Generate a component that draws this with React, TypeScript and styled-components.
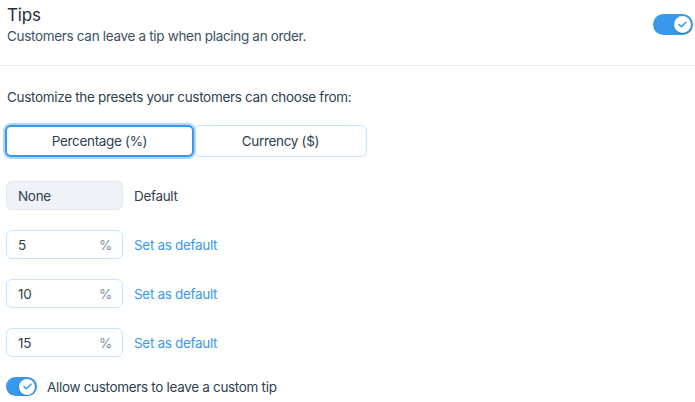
import { useState } from "react";
import styled, { createGlobalStyle } from "styled-components";

const GlobalStyle = createGlobalStyle`
  html, body {
    margin: 0;
    padding: 0;
    background: #ffffff;
  }
  body {
    font-family: Inter, "Noto Sans", "Liberation Sans", sans-serif;
    color: #2f3f50;
    letter-spacing: -0.32px;
    -webkit-font-smoothing: antialiased;
  }
`;

const presets = ["5", "10", "15"];

export default function App() {
  const [unit, setUnit] = useState<"percent" | "currency">("percent");
  const [enabled, setEnabled] = useState(true);
  const [custom, setCustom] = useState(true);

  return (
    <Page>
      <GlobalStyle />
      <Header>
        <div>
          <Title>Tips</Title>
          <Subtitle>Customers can leave a tip when placing an order.</Subtitle>
        </div>
        <Toggle $on={enabled} $width={40} $height={21} onClick={() => setEnabled(!enabled)}>
          <Knob $size={17}>
            <CheckIcon />
          </Knob>
        </Toggle>
      </Header>

      <Body>
        <Intro>Customize the presets your customers can choose from:</Intro>

        <Segmented>
          <SegButton $selected={unit === "percent"} $width={189} onClick={() => setUnit("percent")}>
            Percentage (%)
          </SegButton>
          <SegButton $selected={unit === "currency"} $width={173} onClick={() => setUnit("currency")}>
            Currency ($)
          </SegButton>
        </Segmented>

        <Presets>
          <PresetRow>
            <NoneBox>None</NoneBox>
            <DefaultLabel>Default</DefaultLabel>
          </PresetRow>
          {presets.map((value) => (
            <PresetRow key={value}>
              <InputBox>
                <span>{value}</span>
                <Suffix>%</Suffix>
              </InputBox>
              <LinkButton>Set as default</LinkButton>
            </PresetRow>
          ))}
        </Presets>

        <CustomRow>
          <Toggle $on={custom} $width={31} $height={19} onClick={() => setCustom(!custom)}>
            <Knob $size={16}>
              <CheckIcon />
            </Knob>
          </Toggle>
          <CustomLabel>Allow customers to leave a custom tip</CustomLabel>
        </CustomRow>
      </Body>
    </Page>
  );
}

function CheckIcon() {
  return (
    <svg width="9" height="7" viewBox="0 0 9 7" fill="none">
      <path d="M1 3.6 L3.4 5.8 L8 1.2" stroke="#3899ec" strokeWidth="1.5" strokeLinecap="round" strokeLinejoin="round" />
    </svg>
  );
}

const Page = styled.div`
  width: 695px;
  height: 402px;
  overflow: hidden;
`;

const Header = styled.div`
  display: flex;
  justify-content: space-between;
  align-items: flex-start;
  height: 66px;
  box-sizing: border-box;
  padding: 4px 2px 0 7px;
  border-bottom: 1px solid #e5eaf0;
`;

const Title = styled.div`
  font-size: 17px;
  line-height: 22px;
  color: #1d2d3c;
  font-weight: 400;
  letter-spacing: -0.2px;
`;

const Subtitle = styled.div`
  font-size: 13.5px;
  line-height: 18px;
  color: #3c5064;
  margin-top: 1px;
`;

const Toggle = styled.div<{ $on: boolean; $width: number; $height: number }>`
  display: flex;
  align-items: center;
  justify-content: ${({ $on }) => ($on ? "flex-end" : "flex-start")};
  width: ${({ $width }) => $width}px;
  height: ${({ $height }) => $height}px;
  border-radius: 999px;
  background: ${({ $on }) => ($on ? "#3899ec" : "#c1d1e0")};
  padding: 0 2px;
  box-sizing: border-box;
  margin-top: 10px;
  cursor: pointer;
  flex-shrink: 0;
`;

const Knob = styled.div<{ $size: number }>`
  display: flex;
  align-items: center;
  justify-content: center;
  width: ${({ $size }) => $size}px;
  height: ${({ $size }) => $size}px;
  border-radius: 50%;
  background: #ffffff;
  box-shadow: 0 1px 2px rgba(22, 45, 61, 0.35);
`;

const Body = styled.div`
  padding: 0 6px;
`;

const Intro = styled.div`
  font-size: 13.5px;
  line-height: 20px;
  color: #2f3f50;
  margin-top: 21px;
  padding-left: 1px;
`;

const Segmented = styled.div`
  display: flex;
  margin-top: 18px;
`;

const SegButton = styled.button<{ $selected: boolean; $width: number }>`
  width: ${({ $width }) => $width}px;
  height: 32px;
  box-sizing: border-box;
  font-family: inherit;
  font-size: 13.5px;
  letter-spacing: inherit;
  color: #2f3f50;
  background: #ffffff;
  border-radius: 6px;
  cursor: pointer;
  border: ${({ $selected }) => ($selected ? "2px solid #3899ec" : "1px solid #c9e5fd")};
  box-shadow: ${({ $selected }) => ($selected ? "0 0 0 2px #aed7fb" : "none")};
  position: relative;
  z-index: ${({ $selected }) => ($selected ? 1 : 0)};
  margin-left: ${({ $selected }) => ($selected ? "-1px" : "0")};
`;

const Presets = styled.div`
  display: flex;
  flex-direction: column;
  gap: 20px;
  margin-top: 24px;
`;

const PresetRow = styled.div`
  display: flex;
  align-items: center;
  gap: 11px;
`;

const NoneBox = styled.div`
  display: flex;
  align-items: center;
  width: 117px;
  height: 29px;
  box-sizing: border-box;
  padding-left: 11px;
  background: #eff2f6;
  border: 1px solid #e3e8ee;
  border-radius: 6px;
  font-size: 13.5px;
  color: #2f3f50;
`;

const DefaultLabel = styled.span`
  font-size: 13.5px;
  color: #2f3f50;
`;

const InputBox = styled.div`
  display: flex;
  align-items: center;
  justify-content: space-between;
  width: 117px;
  height: 29px;
  box-sizing: border-box;
  padding: 0 10px 0 11px;
  border: 1px solid #c9e5fd;
  border-radius: 6px;
  font-size: 13.5px;
  color: #2f3f50;
`;

const Suffix = styled.span`
  color: #7d8e9e;
  font-size: 13.5px;
`;

const LinkButton = styled.span`
  font-size: 13.5px;
  color: #3899ec;
  cursor: pointer;
`;

const CustomRow = styled.div`
  display: flex;
  align-items: center;
  gap: 10px;
  margin-top: 10px;

  & > ${Toggle} {
    margin-top: 10px;
  }
`;

const CustomLabel = styled.span`
  font-size: 13.5px;
  color: #2f3f50;
  margin-top: 10px;
`;
